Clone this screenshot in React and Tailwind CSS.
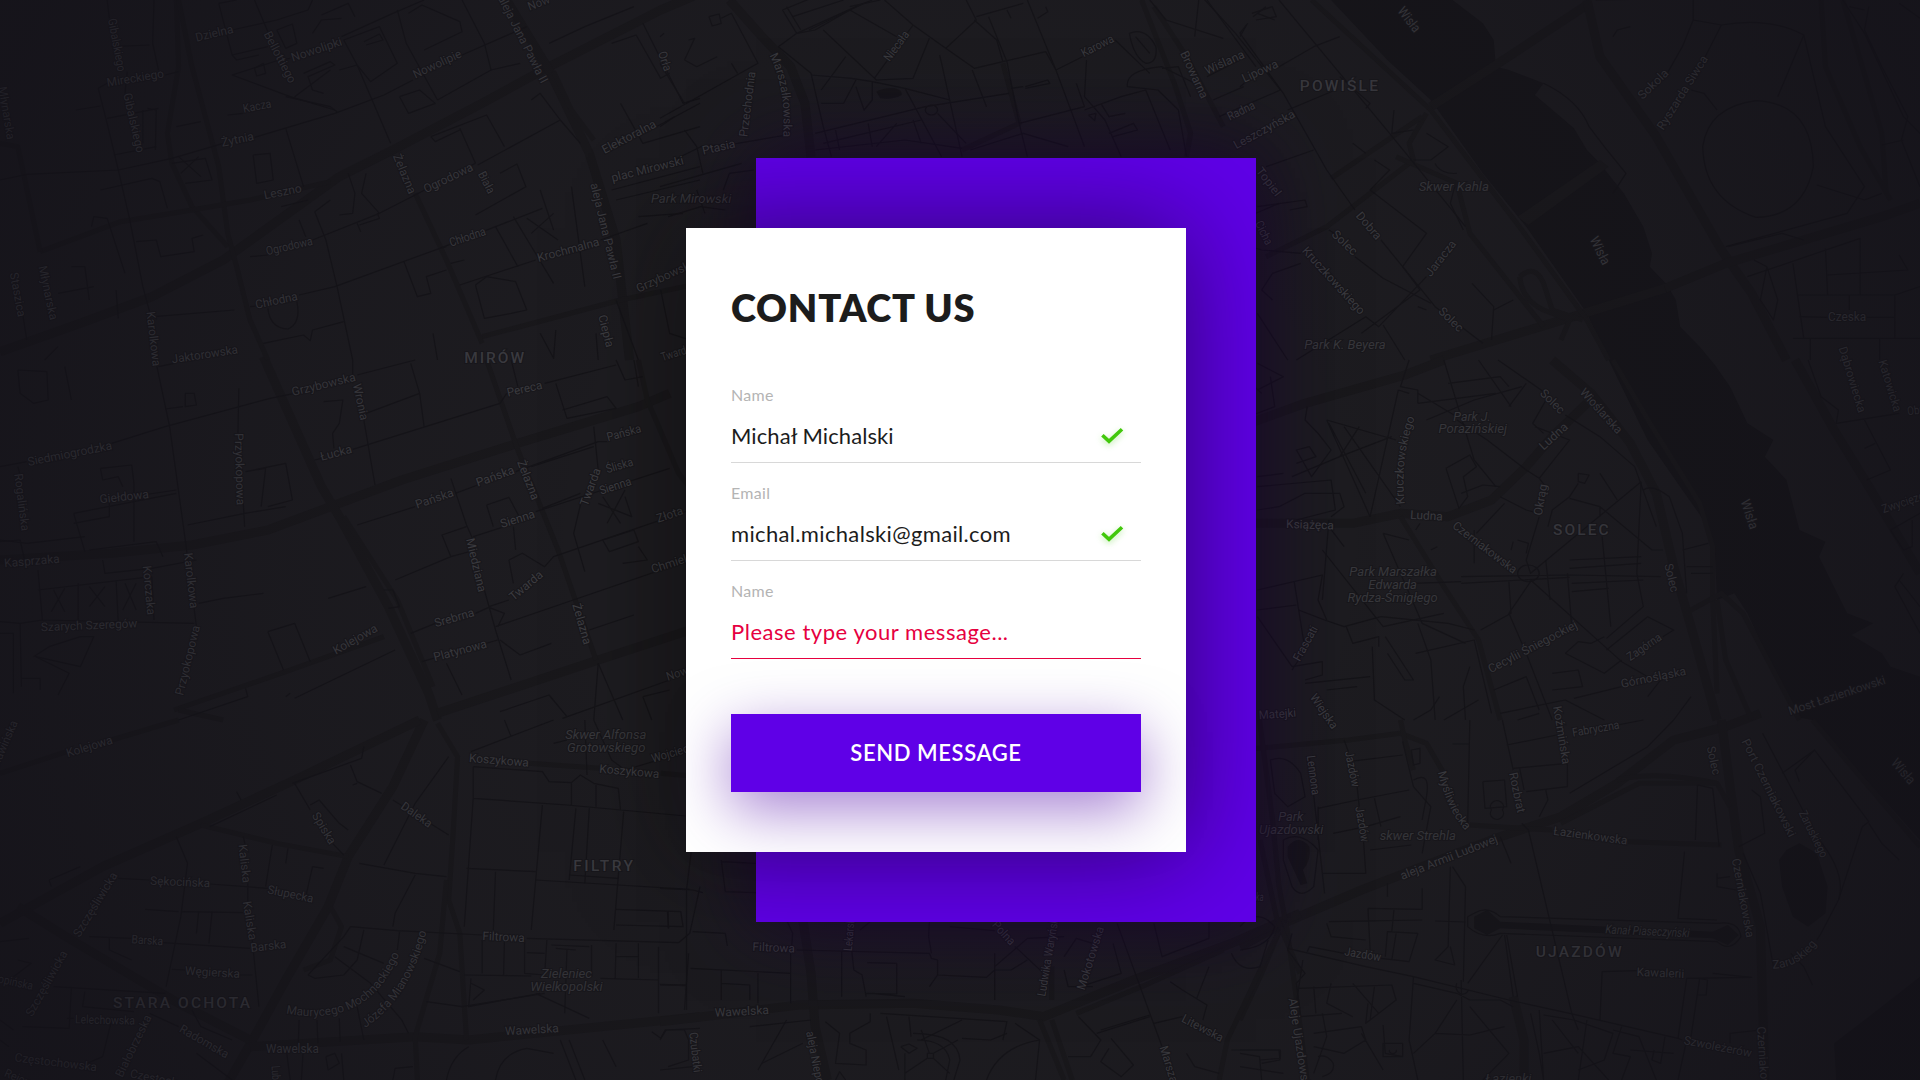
import React from "react";

/* Each map sheet keeps its own local units: x/y is the sheet origin on the page, s its horizontal scale. */
const SHEETS = [
  {
    x: 0, y: 0, s: 0.446429,
    wide: ["M0 1055L180 970L340 890L500 780L760 530L880 450L1080 310L1230 200L1480 30L1568 -20", "M1130 -10L1230 210L1320 460L1380 720L1410 1080"],
    mid: ["M395 0L400 200L375 400L385 490L430 620L510 740", "M400 0L430 200L490 500L510 700L530 800L560 960L600 1080", "M90 755L270 665L430 630L560 600L740 545", "M930 580L1000 780L1080 1030", "M0 430L40 440L90 755", "M1080 1010L1390 900L1568 850", "M1240 215L1280 330L1330 420"],
    thin: [
      "M240 0L245 55M285 215L280 280M345 0L342 130L355 210", "M250 140L335 135M220 265L240 370L265 510L290 655L320 860L335 935", "M220 265L240 250M370 225L400 215M0 540L60 523L265 510L385 475L500 430M570 412L750 340L860 285L925 240M1035 165L1180 80",
      "M170 330L225 318M240 355L355 325M255 465L350 440M225 570L340 535L358 545L375 625", "M330 325L350 330L348 450M320 330L320 430", "M490 10L520 165L600 140M490 10L530 0M570 0L600 95M520 165L530 180L580 165",
      "M520 90L620 60L690 30M690 30L700 0M650 175L625 180L520 225L650 290L750 330", "M620 90L655 72L665 130L640 145L620 90M570 205L590 190L595 220L575 228L570 205", "M640 290L740 320L755 335M740 210L660 290M680 220L740 185L750 195L690 230L700 270L725 280",
      "M760 210L800 195L875 430M800 195L770 120L850 80L890 190L830 245L800 195", "M815 125L850 102L858 120L820 135M890 30L910 130L980 300", "M720 45L780 10L795 50M700 100L720 60L765 55", "M915 40L945 15L1030 65L1035 95L950 150M1035 0L1085 130L1100 210L1165 190",
      "M765 110L880 40L950 0M1100 210L980 300M895 290L940 270L975 310L915 340L895 290", "M640 385L680 560M567 465L605 460L612 540L575 550L567 465M385 490L460 475L475 540L415 550", "M395 380L450 365M400 470L450 530M445 470L405 520M510 345L545 340",
      "M1030 385L1065 490M965 410L1090 345L1130 440M965 410L975 425L1030 390", "M1070 495L1255 360L1210 280L1190 300M1255 360L1300 430M1120 520L1158 492L1178 560L1065 645", "M780 520L795 580L790 640L760 645M820 520L810 580L850 640",
      "M630 620L690 600M705 635L740 600M705 635L730 720L755 860L790 1080M560 770L600 765M700 720L850 640L930 585L1065 490", "M805 675L850 655L845 640M800 670L808 695M670 660L685 710", "M670 885L750 860L985 745L1110 680L1215 625M985 745L1000 740M345 950L525 930M560 920L575 918",
      "M600 925Q605 985 645 987Q675 970 665 905M590 1030L680 1005L695 1022L700 990L770 965", "M905 785L935 890L965 880L955 830L1000 810M1030 855L1200 780M1345 720L1450 670", "M1065 855L1085 955L1145 940L1180 930L1155 845L1090 830L1065 855M1010 790L1040 780M1110 680L1160 800",
      "M1180 655L1250 720M1240 640L1190 700M1150 650L1240 850M1210 570L1240 690M1280 560L1310 860", "M1370 130L1425 105L1480 235L1500 220M1440 70L1530 310L1568 295M1470 380L1568 310", "M1390 310L1440 430L1568 380M1380 600L1568 540M1370 570L1568 500M1430 650L1530 640",
      "M205 680L210 650L240 655L280 820M160 800L190 800L200 900M130 880L210 860M305 725L350 720L360 770L435 755L430 715L455 705", "M60 1020L40 850M100 1080L130 1040M260 870L265 955", "M1380 900L1430 1080M1335 1000L1340 1080M1210 1000L1240 1075L1245 990M970 1000L980 1080",
      "M1480 870L1500 1000L1568 1030M1230 130L1310 80L1420 20",
    ],
    labels: [
      ["Gibalskiego", 242, 58, 264, 216, 26], ["Dzielna", 440, 125, 524, 98, 28], ["Bellottiego", 590, 102, 648, 252, 26], ["Nowolipki", 656, 185, 768, 135, 28], ["Mireckiego", 241, 260, 368, 232, 28], ["Gibalskiego", 276, 282, 306, 460, 28],
      ["Kacza", 546, 338, 609, 322, 26], ["Żytnia", 498, 440, 570, 420, 28], ["Nowolipie", 930, 236, 1036, 170, 28], ["aleja Jana Pawła II", 1115, -6, 1212, 252, 26], ["Now", 1186, 32, 1234, 8, 28], ["Orła", 1474, 158, 1488, 216, 26],
      ["Młynarska", -4, 262, 16, 420, 26], ["Elektoralna", 1354, 462, 1472, 380, 27], ["plac Mirowski", 1372, 546, 1533, 492, 28], ["Park Mirowski", 1458, 608, 1638, 609, 28, 1], ["Żelazna", 880, 468, 916, 584, 27], ["Ogrodowa", 954, 580, 1062, 510, 27],
      ["Biała", 1070, 522, 1094, 584, 26], ["Leszno", 593, 598, 677, 576, 28], ["aleja Jana Pawła II", 1322, 552, 1374, 840, 27], ["Ogrodowa", 598, 766, 702, 734, 27], ["Chłodna", 1010, 740, 1090, 704, 27], ["Krochmalna", 1206, 786, 1344, 736, 27],
      ["Grzybowska", 1430, 878, 1560, 798, 27], ["Staszica", 22, 820, 40, 952, 26], ["Młynarska", 86, 800, 112, 962, 27], ["Chłodna", 574, 926, 668, 900, 28], ["Karolkowa", 328, 936, 342, 1100, 27], ["Jaktorowska", 386, 1090, 534, 1060, 28],
      ["Ciepła", 1340, 948, 1358, 1044, 26], ["Twarda", 1484, 1084, 1550, 1056, 27], ["MIRÓW", 1040, 1090, 1174, 1090, 30, 2],
    ],
  },
  {
    x: 0, y: 360, s: 0.446429,
    wide: ["M0 600L250 580L430 555L600 510L740 440L900 360L1160 250L1430 140L1500 100", "M590 -10L720 380L760 470L870 740L960 1000L980 1080", "M980 1060L1340 900L1568 800"],
    mid: ["M1090 0L1160 270L1250 570L1335 900", "M1430 0L1450 120L1520 340L1568 420", "M390 1050L640 935L860 830", "M770 470L890 720L970 980", "M400 1050L500 1080"],
    thin: [
      "M350 10L380 200L415 540L440 800M0 320L60 305M250 250L370 200L605 115L660 100M355 20L390 10M800 45L930 0", "M40 30L105 35L108 120L75 130L45 100L40 30M145 20L160 120M415 100L435 100L440 135L415 140L415 100", "M370 147L410 140M535 85L533 220M545 430L548 500M420 495L548 460L640 440",
      "M725 125L768 120L760 190L745 220L748 265M790 0L790 70M815 180L840 375M920 10L940 100L820 160M940 100L950 200", "M705 300L720 295M790 268L1120 130L1135 100M1220 70L1380 15M1145 0L1160 80", "M225 325L295 315L300 370L300 545M225 325L230 360L265 350L275 380M165 460L395 400M165 460L190 575M165 490L245 470L245 420L395 390",
      "M550 335L595 325L585 440M550 335L640 310L655 420L600 440M40 320L45 345M0 540L60 550L190 530", "M0 545L45 540L55 600M200 570L350 545L365 590M230 600L235 640L340 625L440 600", "M800 495L930 440M1020 400L1070 375M1155 335L1340 245L1360 245M1190 320L1330 260",
      "M1010 355L1045 495L1060 540M1045 500L990 525L1010 590L885 660M1090 435L1140 412L1165 475M1090 435L1105 500M1010 590L1065 570", "M1060 530L1130 500M1200 455L1350 390L1500 325M1215 445L1300 400M1330 200L1340 330M1300 435L1285 520L1310 635", "M1140 600L1170 580L1220 620L1240 590L1568 440M1140 600L1150 670M1150 500L1155 570",
      "M1350 540L1420 510L1430 545L1365 575L1350 540M1430 560L1450 600L1395 610M1350 410L1390 490M1400 390L1360 490M1400 410L1415 470L1340 430", "M1110 800L1284 720L1568 590M1095 740L1140 720M920 820L975 790M1065 760L1095 742L1130 760L1115 800M1085 690L1110 810L1145 960",
      "M735 715L820 680M600 815L660 790L695 905M600 815L635 930M660 1015L885 870M860 690L880 690L895 740L870 745", "M445 730L500 715L590 700M85 690L340 650M85 630L95 780M95 780L435 790M0 785L45 790L95 780M175 670L175 780M260 660L265 790M340 650L345 780",
      "M120 690L145 755M145 685L115 755M200 680L235 740M235 680L200 740M280 670L305 750M305 670L275 750", "M0 820L30 820L30 1000M45 790L48 980M75 890L110 860L180 830L210 830L180 920L80 890L155 940L130 1005M48 955L90 955L90 990",
      "M550 985L555 1010L400 1080M640 1010L650 1000M1120 840L1165 885L1235 850M945 905L1115 840M1320 810L1420 765M1000 910L1035 1005", "M1340 910L1330 1080M1340 910L1395 1080M1120 1055L1230 1005L1270 1070M1440 1010L1500 990M1440 1010L1460 1080M1260 1075L1500 960",
      "M1245 70L1270 175L1380 145L1360 110L1260 150M1380 0L1400 60L1440 50M1420 0L1430 80",
    ],
    labels: [
      ["Grzybowska", 656, 108, 798, 62, 28], ["Wronia", 790, 74, 808, 182, 27], ["Pereca", 1138, 110, 1216, 86, 28], ["Pańska", 1362, 244, 1438, 216, 27], ["Siedmiogrodzka", 64, 318, 252, 268, 28], ["Łucka", 720, 302, 790, 278, 28],
      ["Przyokopowa", 526, 220, 530, 436, 27], ["Pańska", 1070, 380, 1154, 340, 27], ["Śliska", 1360, 340, 1420, 316, 27], ["Twarda", 1316, 440, 1346, 330, 26], ["Sienna", 1346, 404, 1416, 374, 26], ["Rogalińska", 32, 342, 48, 514, 27],
      ["Giełdowa", 224, 430, 334, 414, 28], ["Pańska", 934, 446, 1018, 408, 28], ["Żelazna", 1158, 306, 1192, 422, 27], ["Sienna", 1124, 504, 1200, 472, 27], ["Złota", 1474, 488, 1532, 462, 27], ["Kasprzaka", 10, 622, 134, 608, 28],
      ["Karolkowa", 412, 580, 426, 746, 27], ["Korczaka", 320, 618, 330, 766, 27], ["Miedziana", 1044, 538, 1072, 698, 27], ["Twarda", 1150, 724, 1218, 648, 27], ["Chmielna", 1462, 640, 1568, 594, 27], ["Szarych Szeregów", 92, 814, 308, 802, 28],
      ["Srebrna", 976, 802, 1064, 768, 28], ["Żelazna", 1282, 734, 1308, 856, 27], ["Kolejowa", 752, 884, 848, 812, 27], ["Platynowa", 974, 904, 1092, 862, 28], ["Przyokopowa", 410, 1008, 448, 800, 27], ["Nowogrodzka", 1496, 962, 1640, 900, 28],
    ],
  },
  {
    x: 0, y: 720, s: 0.446429,
    wide: ["M950 0L880 200L780 410L735 560L640 780L570 950L510 1090", "M0 610L230 440L450 310L660 180L940 0", "M40 560L160 660L400 850L560 960", "M560 980L930 950L1050 960L1568 890"],
    mid: ["M980 10L1025 110L1015 340L1005 540L1030 640L1045 960", "M450 315L620 370L780 410", "M1185 130L1345 145M1480 160L1568 170", "M0 160L150 95M250 60L400 0", "M1000 480L985 700L930 950L935 1080", "M740 560L765 620L740 720L680 750"],
    thin: [
      "M655 190L810 115L815 80M785 135L800 185L855 220M660 190L695 270M745 370L770 405M695 255L715 240L760 310L780 330M470 320L620 225M530 215L540 240", "M800 190L790 195M880 240L1005 345M1005 110L930 250L860 435M805 430L930 460L1000 470M930 465L885 580L880 620",
      "M1055 95L1240 0M1130 0L1145 50M1060 235L1270 255L1536 288M1060 140L1060 235L1040 620M1060 140L1215 155L1230 185L1280 188L1300 165L1330 190L1385 205L1390 270", "M1280 190L1280 255M1335 195L1335 260M1215 255L1200 480L1190 630M1290 265L1275 480M1320 265L1310 490M1397 275L1375 630",
      "M1045 445L1200 455M1110 455L1105 630M1200 480L1385 495L1545 508M1275 465L1385 475M1380 568L1525 575L1530 620L1380 615M1495 575L1498 625", "M785 620L890 632L1080 645M1180 655L1520 668L1545 640L1568 500M785 620L770 650L690 765", "M1040 765L1190 768M1345 775L1475 780M1055 775L1050 860L1210 820M1055 790L1085 810L1060 840M1200 820L1320 895",
      "M1080 660L1080 760M1130 660L1128 765M1175 660L1175 760L1220 765L1225 660M1380 670L1378 775M1430 670L1430 775M1475 680L1475 880M1380 710L1430 710M1180 698L1220 700", "M1235 675L1320 680M1245 685L1290 690M1325 675L1325 770M1270 690L1265 880M1478 793L1536 795",
      "M265 475L335 480M470 492L600 505M395 350L420 430L405 590L372 800M405 575L545 578M325 568L400 575M545 350L550 380M555 490L555 545M565 660L580 860", "M200 650L295 655M365 668L560 685M445 575L440 640M475 575L468 670M610 375L595 500M645 385L640 430M700 440L685 530M700 440L725 445",
      "M120 800L370 820M160 800L155 925L50 920M190 815L185 860L300 875M385 748L415 750M538 765L565 765M245 655L245 690L295 720M150 895L165 895", "M0 665L65 655M30 770L70 730L40 720M110 480L180 440M110 480L115 500M430 870L450 920L520 960M335 880L400 920",
      "M690 765L705 775L770 765L800 720L815 630M770 680L860 730M750 710L830 790L900 900L915 940M895 635L890 690M950 715L1030 755M955 845L1035 860L1220 820", "M800 860L815 960M670 900L668 975M710 900L712 970M760 895L762 965M680 975L675 1080M640 975L650 1080M765 1000L770 1080",
      "M730 1010L750 1000L760 1030L735 1050L730 1010M1110 1080Q1120 1000 1180 985L1240 1000M1050 980Q1010 1010 1000 1080M1255 960L1290 1080M1275 960L1310 1080M1350 960L1380 1040", "M1460 935L1480 955L1490 930L1568 925M880 1080L885 1045L925 1040M250 900L230 1010L195 1030M440 1000L520 1080M0 900L30 930M0 960L20 980",
      "M1240 70L1270 60M1310 0L1315 165M1330 0L1370 120L1400 150L1500 110",
    ],
    labels: [
      ["Bolesławińska", -24, 206, 40, 8, 25], ["Kolejowa", 152, 112, 254, 70, 28], ["Skwer Alfonsa", 1266, 56, 1448, 56, 28, 1], ["Grotowskiego", 1270, 96, 1446, 96, 28, 1], ["Wojciecha", 1462, 128, 1570, 86, 28], ["Koszykowa", 1050, 126, 1184, 140, 28],
      ["Koszykowa", 1342, 158, 1476, 174, 28], ["Daleka", 896, 264, 960, 324, 27], ["Spiska", 698, 286, 738, 376, 27], ["FILTRY", 1284, 454, 1418, 454, 32, 2], ["Kaliska", 534, 374, 544, 490, 27], ["Sękocińska", 336, 494, 470, 502, 28],
      ["Słupecka", 598, 520, 700, 548, 28], ["Kaliska", 544, 545, 558, 662, 27], ["Szczęśliwicka", 178, 654, 264, 466, 27], ["Barska", 294, 670, 365, 676, 28], ["Barska", 562, 696, 642, 684, 28], ["Filtrowa", 1080, 660, 1175, 666, 28],
      ["Szczęśliwicka", 72, 892, 152, 700, 27], ["Węgierska", 414, 764, 537, 774, 28], ["Chopińska", -32, 780, 72, 810, 27], ["STARA OCHOTA", 253, 864, 560, 864, 32, 2], ["Zieleniec", 1212, 774, 1326, 774, 28, 1], ["Wielkopolski", 1188, 812, 1350, 812, 28, 1],
      ["Maurycego Mochnackiego", 640, 880, 898, 690, 27, 0, 830, 930], ["Józefa Mianowskiego", 818, 924, 954, 640, 26, 0, 920, 830], ["Lelechowska", 168, 910, 302, 914, 28], ["Białobrzeska", 274, 1074, 340, 892, 27], ["Radomska", 400, 934, 506, 1016, 27], ["Wawelska", 1132, 946, 1252, 936, 28],
      ["Wawelska", 596, 998, 714, 998, 28], ["Częstochowska", 32, 1024, 216, 1054, 28], ["Czubatki", 1544, 938, 1554, 1058, 25], ["Częstochowska", 290, 1072, 470, 1120, 27], ["Lubelska", 608, 1038, 612, 1140, 26], ["Rejowa", 8, 1068, 80, 1110, 27],
    ],
  },
  {
    x: 1240, y: 0, s: 0.433673,
    water: ["M210 0L490 0L560 70L585 120L590 200L620 210L700 250L680 285L770 385L800 450L830 490L860 540L885 580L930 680L950 760L945 800L985 855L1005 900L1015 980L1060 1040L1095 1095L1130 1160L1170 1270L1230 1320L1210 1370L1260 1440L1290 1590L1350 1625L1335 1670L1400 1840L1460 1870L1410 1905L1480 1960L1500 2000L1568 2030L1568 2520L1320 2160L1280 2150L1170 1840L1140 1780L1100 1800L1095 1650L1080 1580L1020 1470L940 1320L850 1080L800 940L660 680L560 520L440 300L340 180Z"],
    land: ["M640 650L830 480L850 500L665 675Z"],
    wide: ["M440 320L590 195L800 15", "M800 0L830 170L960 410L1110 750L1180 880L1260 1080", "M980 865L1120 790L1480 650L1568 610", "M440 1080L680 985L980 865"],
    mid: ["M165 0L440 330L650 690L800 960L850 1080", "M60 770L200 680L400 480L390 430L430 340", "M360 470L500 550L530 700L700 980", "M1340 0L1350 200L1430 440L1500 600M1390 0L1480 400L1490 580", "M210 535L420 350", "M645 830Q680 790 700 850L720 930L790 960M645 830Q650 900 700 930L760 960L740 1020"],
    thin: [
      "M90 0L345 400L520 680M0 100L100 280L200 510L265 630M325 720L450 920L560 1030", "M0 260L10 250M90 200L170 140L230 110M110 330L220 270M60 500L170 450M0 660L90 610M230 230L300 310L290 325M40 40L80 60M30 50L60 20M0 110L15 75",
      "M260 430L290 460M310 480L345 510L300 570L430 700L375 800L415 870L280 1000M205 690L230 710M265 770L330 835L440 910M430 830L320 980L290 950M535 850L585 920L580 1020M585 930L630 900", "M400 390L350 400L355 330M430 400L480 440L440 480L400 480M450 490A45 40 0 0 0 500 520M495 560L485 610L515 690",
      "M1045 0L1045 60L1020 140L985 220M1045 60L1110 75L1065 190M1110 75Q1220 50 1300 105L1240 290M1300 105L1350 380L1440 560L1400 640L1120 740M1040 270L1070 280L1100 330", "M1190 302Q1320 310 1322 500Q1300 650 1190 652Q1070 600 1067 440Q1080 320 1190 302Z",
      "M1390 0L1440 100L1530 350L1568 400M1450 20L1440 90L1480 200L1540 350L1525 420L1568 560M1520 10L1568 55M1480 435L1530 420M1330 555L1440 600L1480 580M1405 20L1440 30", "M1125 740L1250 700L1300 720M1170 830L1430 715L1430 885M1350 745L1355 885M1275 790L1300 1015M1285 885L1510 885L1568 860M1290 950L1355 952M1445 952L1510 952M1510 885L1510 1015M1275 1015L1568 1015M1355 825L1540 810L1520 765M1315 1015L1315 1080M1475 1015L1475 1080M1405 885L1405 930",
      "M1185 780L1215 800L1240 900L1230 960L1200 900L1215 800M40 620L150 600L155 620L115 630M0 730L50 750L140 760M140 790L75 820L50 870L75 900", "M40 940L110 1080M290 950L130 1080M330 975L380 1080M410 920L430 930M820 0L1040 -5M700 250Q780 300 805 380L840 440L890 520L860 580M860 110L870 90L900 80",
    ],
    labels: [
      ["Wisła", 362, 34, 402, 100, 32], ["POWIŚLE", 138, 272, 318, 272, 34, 2], ["Lipowa", 10, 248, 90, 200, 28], ["Sokola", 928, 300, 990, 222, 27], ["Ryszarda Siwca", 976, 392, 1080, 176, 28], ["Topiel", 36, 514, 82, 592, 27],
      ["Skwer Kahla", 412, 572, 574, 572, 29, 1], ["Cicha", 34, 670, 60, 738, 26], ["Dobra", 266, 648, 314, 722, 27], ["Solec", 210, 706, 260, 768, 27], ["Jaracza", 440, 832, 500, 732, 27], ["Wisła", 806, 718, 836, 798, 32],
      ["Kruczkowskiego", 142, 754, 276, 946, 28], ["Solec", 456, 936, 504, 998, 27], ["Park K. Beyera", 148, 1046, 336, 1046, 29, 1], ["Czeska", 1356, 962, 1444, 962, 28], ["Dąbrowiecka", 1380, 1044, 1426, 1240, 28],
    ],
  },
  {
    x: 1240, y: 360, s: 0.433673,
    wide: ["M0 200L150 130L380 45L470 0", "M0 490L260 490L370 460L480 470L580 420L660 320L720 230L800 130", "M1280 0L1370 210L1450 380L1568 640", "M720 0L810 100L900 250L960 400L1000 620L1040 800L1100 1080"],
    mid: ["M860 0L950 200L1060 430L1090 560L1090 720L1100 1000", "M1040 750L1110 700L1160 760L1290 1080", "M370 470L470 680L550 840L600 1080", "M1100 720L1120 900L1180 1080"],
    thin: [
      "M595 0L700 95M750 165L830 230L910 320L960 500M650 80L540 120L430 180M470 0L540 300L590 380M550 0L625 140M660 70L620 140M480 70L600 50L620 80", "M680 200L760 240L690 355L660 330L570 240L500 180M710 110L675 190L700 220M690 355L705 380M830 340L870 420M780 340L805 345L795 370L780 365L780 340M780 370L760 410L720 450L710 500",
      "M925 365L670 640L660 600L690 470M640 640A20 20 0 1 0 690 640A20 20 0 1 0 640 640M925 365L915 640L930 740L845 835M760 415L830 440L950 570L975 570M830 440L830 470", "M475 325L530 285L545 320L515 350L525 410L505 445L475 325M510 400L560 375L600 380M600 410L660 450L690 460M610 430L545 520",
      "M200 180L300 470M200 180L360 240M240 200L370 440M275 200L230 290L120 350M230 290L350 230M205 190L290 400M365 90L300 470M365 90L390 100M410 130L590 100M410 100L500 170M390 0L370 80L410 90L410 130", "M130 310L175 290L160 260L130 270L165 350L210 270L180 220L150 180L155 140M40 380L210 360L220 450L130 480M40 450L90 440L150 400L230 400L240 440L210 470",
      "M40 690L190 645L180 720L200 780M125 665L150 870L120 930M40 750L130 735M40 770L120 920M330 520L420 790L520 850M205 500L240 560M205 480L190 720M330 520L390 540", "M510 650L760 645L970 650M510 670L760 652M400 670L510 665M760 600L925 590M760 625L925 610M765 670L930 660M765 695L850 685M705 600L715 720M540 510L540 610M835 530L855 800M755 640L765 800",
      "M670 660L880 905L940 950M640 540L665 550L660 580M625 570L630 545M620 665L625 760L555 810M670 665L620 760L660 880L720 1080M415 490L405 510M440 570L455 560", "M135 750L195 780L240 800L325 770L480 790L540 810M245 800L260 850L320 830L320 860M305 860L310 1020L380 1080M335 830L400 960L380 960L340 880M410 790L440 900L450 1080",
      "M845 870L940 770L1000 810L975 830M750 880L780 845L810 850L840 830M750 880L840 940L880 900M120 920L190 905L190 945L150 960M150 970L300 950M200 990L270 980M585 990L660 950L690 1050M720 940L780 930L790 980L720 990", "M405 880L540 840L580 1060M530 920L515 980L520 1080M770 1015L880 980M1030 940L970 960L940 1010M600 1060L750 1020L840 1080M640 1080L690 1060",
      "M930 390Q950 370 990 410L1020 520L1030 700M1020 570L1080 550M1030 620L1090 620M1040 640L1090 640", "M1310 0L1340 110L1380 150L1375 190L1520 160M1440 180L1500 330L1445 360M1440 265L1465 250M1568 460L1500 510L1530 570L1550 560L1550 480M1520 660L1568 740M1530 640L1510 680L1568 820",
      "M40 90L100 50L40 10M70 50L80 140L0 180M0 40L50 100M40 350L100 340M1040 1010L1000 1080M550 1020L470 1080M460 1010L440 1050L400 1080M190 570L330 800L470 760",
    ],
    labels: [
      ["Wioślarska", 782, 98, 870, 224, 28], ["Solec", 690, 102, 738, 164, 27], ["Park J.", 492, 182, 578, 182, 29, 1], ["Porazińskiej", 458, 220, 616, 220, 29, 1], ["Ludna", 700, 272, 758, 204, 28], ["Kruczkowskiego", 380, 432, 402, 178, 27, 0, 368, 300],
      ["Katowicka", 1472, 4, 1508, 158, 27], ["Obrońców", 1540, 166, 1640, 150, 27], ["Okrąg", 696, 468, 708, 374, 27], ["Ludna", 392, 476, 467, 482, 28], ["Książęca", 106, 504, 216, 508, 29], ["SOLEC", 722, 524, 850, 524, 34, 2],
      ["Czerniakowska", 488, 502, 630, 642, 28], ["Wisła", 1154, 424, 1176, 510, 32], ["Zwycięzców", 1484, 460, 1610, 404, 27], ["Park Marszałka", 252, 647, 454, 647, 29, 1], ["Edwarda", 296, 686, 408, 686, 29, 1], ["Rydza-Śmigłego", 248, 726, 456, 726, 29, 1],
      ["Solec", 978, 614, 994, 698, 27], ["Cecylii Śniegockiej", 578, 940, 780, 802, 28], ["Frascati", 138, 906, 180, 806, 27], ["Zagórna", 900, 904, 974, 838, 27], ["Górnośląska", 880, 984, 1030, 944, 28], ["Most Łazienkowski", 1268, 1066, 1490, 970, 29],
      ["Wiejska", 160, 1012, 212, 1110, 27], ["Matejki", 44, 1078, 130, 1070, 28], ["Koźmińska", 722, 1040, 744, 1214, 27],
    ],
  },
  {
    x: 1240, y: 720, s: 0.433673,
    water: ["M1260 390L1290 370L1330 400L1355 500L1350 580L1310 620L1275 590L1250 500L1243 420Z", "M540 590L570 570L600 605L1090 635L1125 615L1150 645L1125 675L1090 655L600 625L570 645L540 625Z", "M1568 770L1450 890L1370 970L1375 1080L1568 1080Z", "M110 380Q135 340 160 380Q165 420 145 450L155 490L140 495L110 410Z"],
    wide: ["M0 680L100 610L280 510L600 350L740 290L870 190L1000 60L1120 20L1200 -20", "M1110 0L1130 200L1150 390L1200 620L1210 1080", "M630 830L655 960L655 1080"],
    mid: ["M870 180Q960 150 1100 190L1130 260", "M0 90L250 60L370 40L430 70L470 160M530 315L650 325L720 330M895 365L1110 375", "M370 0L380 60L400 150", "M95 620L50 760L0 900", "M45 0L75 300L90 500L110 640L155 1080", "M1320 0L1450 200L1568 380", "M740 310L920 190L1100 190"],
    thin: [
      "M240 60L250 95M270 200L275 260M285 365L290 460L190 460M250 125L375 105M180 265L270 240L390 210M215 340L290 320L370 290M300 390L395 375M160 110L195 520M375 65L400 200L440 260L420 400M180 360L180 260M310 235L325 320", "M395 90L415 85L415 130L400 135L395 90M400 180Q440 150 430 230L420 300",
      "M560 185L610 180L615 260L565 265L560 185M580 270A15 18 0 1 0 605 270A15 18 0 1 0 580 270M530 0L525 310M490 72L530 72M605 0L630 150M615 75L730 45M735 0L745 130M630 145L755 130L755 200L660 215M645 145L655 210M650 310L665 330L765 880L780 930", "M1000 0L940 80L760 220M770 40L930 0M690 290L710 240L705 210M600 350L625 430",
      "M1055 195L1050 360M1055 195L1090 205L1105 380M1025 395L1010 595L1100 600M1100 460L1100 500L1145 510M1100 475L1130 470M1150 380L1210 340L1200 230L1180 210M1205 40L1330 350M1250 160L1325 90L1450 305L1435 320L1380 540M1325 90L1280 150L1290 185", "M1330 350Q1400 460 1380 540L1340 640L1330 660M1230 740L1200 520L1160 400M1450 310L1480 370L1520 420M1270 700L1300 740L1320 795",
      "M525 590L540 580Q570 555 600 590L1100 610Q1150 600 1155 650Q1130 700 1100 665L600 640Q560 660 525 620ZM450 603L520 606M605 645L525 790M610 645L630 830M615 645L640 830", "M110 685L290 740L400 770L620 840L760 880L1010 955L1020 960M155 695L160 680L240 700M325 715L390 725L410 640L340 635L335 710M360 640L350 720M295 565L420 568L420 505M295 565L300 690M205 605L420 600M355 570L350 635M200 610L210 650L290 660M340 490L340 530M485 440L480 680L450 720L495 735L485 680M490 440L520 500L515 785",
      "M120 640L110 690L150 760L130 790L140 890L235 880M145 720L130 850M135 805L350 795L360 840L290 910L295 850M170 800L175 880M210 790L200 850L260 890M260 790L320 880M310 800L300 900M400 770L390 960L410 1080M400 790L500 820L530 840L600 840L630 860M500 840L450 940L400 1000M450 940L530 945L610 920M530 860L620 1000L560 1080M510 780L515 1080M500 790A15 22 0 1 0 527 810",
      "M170 940L280 920L290 960L240 1000L170 980M330 915L335 1000L375 1010M330 970L375 970L375 1010L330 1010ZM345 990A8 8 0 1 0 360 990M0 990L90 990L92 1020L50 1030M0 1000L45 1010L50 1080M180 1010Q200 1000 215 1030Q220 1060 190 1070M280 940L330 1050", "M670 880L690 1000L700 1080M690 870L700 1080M700 885L770 900L860 940L840 1020L780 1050M700 1000L780 980L850 1080M720 900L780 1000M800 900L780 1080M860 930L920 950L960 1080M880 920L860 1000L900 1010L880 1080M980 950L970 1030L950 1020L955 990M1030 960L1010 1080M900 990L1000 1000",
      "M830 900L835 755L915 752M1030 775L1180 772L1090 760M1030 775L1010 955M1060 775L1040 950M1060 775L1078 780L1075 825L1055 825M1200 930L1130 940L1130 970", "M0 1040L100 1060M190 880L200 950L170 1060M0 620Q40 560 80 620Q70 680 0 690M70 120Q110 100 140 160L150 230L110 260L80 220ZM100 360Q140 330 180 390L170 500Q140 540 120 500L100 420Z",
    ],
    labels: [
      ["Fabryczna", 768, 50, 876, 26, 28], ["Solec", 1076, 82, 1090, 166, 27], ["Port Czerniakowski", 1156, 64, 1266, 354, 28], ["Wisła", 1500, 130, 1544, 196, 32], ["Lennona", 154, 108, 166, 226, 26], ["Jazdów", 242, 96, 258, 202, 27],
      ["Myśliwiecka", 456, 156, 516, 326, 27, 0, 478, 270], ["Rozbrat", 620, 160, 640, 280, 27], ["Jazdów", 266, 262, 280, 368, 27], ["Park", 88, 302, 146, 302, 29, 1], ["Ujazdowski", 44, 341, 192, 341, 29, 1], ["skwer Strehla", 322, 359, 498, 359, 29, 1],
      ["Łazienkowska", 722, 344, 892, 374, 28], ["aleja Armii Ludowej", 374, 480, 596, 366, 28], ["Zaruskiego", 1288, 278, 1340, 416, 27], ["Czerniakowska", 1134, 418, 1168, 654, 27], ["Kanał Piaseczyński", 842, 640, 1036, 652, 26, 1], ["UJAZDÓW", 682, 710, 880, 710, 36, 2],
      ["Jazdów", 240, 706, 324, 724, 28], ["Zaruskiego", 1228, 746, 1330, 672, 27, 0, 1290, 744], ["Kawalerii", 914, 768, 1024, 774, 28], ["Aleje Ujazdowskie", 112, 836, 146, 1130, 27], ["Szwoleżerów", 1022, 972, 1178, 1012, 28], ["Czerniakowska", 1192, 920, 1204, 1160, 27], ["Łazienki", 566, 1088, 672, 1088, 29, 1],
    ],
  },
  {
    x: 660, y: 0, s: 0.408163,
    water: ["M530 275Q545 262 575 265Q595 272 592 285Q570 300 540 295Z"],
    wide: ["M170 0L250 110L320 200L355 310L370 470"],
    mid: ["M1210 20L1290 170L1380 380", "M840 190L880 370L740 450", "M1180 0L1260 250L1300 400L1290 470"],
    thin: [
      "M120 50L145 42L150 70L128 78L120 50M150 55L175 40L240 190L0 355M0 110L10 100M60 180L85 115L70 120M60 180L90 200L140 170M175 190L190 220", "M0 190L60 310M300 30L400 -20M300 30L335 100L480 20L520 0M310 20L345 90M290 140L335 100L380 90L465 30L580 110M290 140L370 220L400 380L420 470", "M325 50L450 0M365 90L500 10M400 90L530 240L620 235L660 115M465 20L540 0",
      "M550 0L620 75L700 145L770 205L840 185L945 155L970 210M620 75L525 235M700 145L775 60L750 0M775 50L890 10M770 60L825 120L840 185M900 0L970 210L1040 440M850 30L860 55M805 50L850 185L880 370L900 470M925 55L950 35L945 20",
      "M370 225L470 235L520 245L600 265L710 300M480 240L450 310L395 310M520 245L520 300L500 330L480 260M455 170L395 270M600 265L690 470M685 165L690 190L740 470M765 210L800 320M380 400L650 320L855 280M650 330A15 15 0 1 0 680 330A15 15 0 1 0 650 330",
      "M400 430L640 360M380 450L600 420L740 445M430 390L440 450M510 370L520 440M580 370L530 440M620 360L640 430M680 340L750 430M895 260L950 240L955 250L895 265M860 265L890 260M880 370L1040 320L1020 250M760 450L890 400L1000 440",
      "M970 210L1035 170M1115 120L1200 220M1150 100Q1190 80 1215 140Q1220 190 1190 190Q1160 170 1150 100M1165 110L1200 160M1145 260Q1140 210 1230 200L1310 250M1145 260L1220 270L1270 330L1290 470M1230 205L1270 200L1300 290M1200 0L1240 60L1380 115M1320 0L1310 110M1320 -20L1410 100L1520 270",
      "M1045 180L1040 290L1090 360L1130 470M1040 330L1130 290L1190 270L1250 450M1080 310L1100 350L1140 340M1100 400L1160 370L1170 390L1110 410M1050 345L1068 340L1065 362L1050 345M1340 230L1420 180M1355 300L1430 260M1370 350L1520 270M1340 0L1460 200M1420 100L1440 70M1450 40L1500 20L1510 50L1460 60",
      "M0 380L35 350M0 500L100 440L190 430L310 405M0 560L200 490M60 390L90 440L105 520M155 570L170 520L230 510M20 650L100 620L160 630M90 570L110 640",
    ],
    labels: [
      ["Niecała", 562, 186, 612, 104, 28], ["Karowa", 1038, 172, 1114, 124, 29], ["Marszałkowska", 268, 166, 302, 402, 30, 0, 308, 260], ["Przechodnia", 214, 412, 234, 216, 29], ["Ptasia", 106, 464, 186, 442, 31], ["Browarna", 1274, 160, 1326, 298, 29],
      ["Wiślana", 1340, 224, 1434, 172, 31], ["Radna", 1396, 362, 1460, 324, 30], ["Leszczyńska", 1412, 448, 1558, 350, 31],
    ],
  },
  {
    x: 660, y: 840, s: 0.408163,
    wide: ["M0 545L140 525L340 495L620 490L830 510L940 530L1160 420L1400 310L1568 220", "M350 240L370 400L380 560L410 720"],
    mid: ["M1530 240L1490 340L1390 600L1370 720", "M930 540L990 720M960 540L1010 720", "M1470 0L1510 230L1568 400", "M1020 520L1180 440L1380 330", "M960 380L960 480"],
    thin: [
      "M80 0L65 150L65 510M150 60L160 155L235 158M0 145L80 150L105 158M150 65L235 70M75 385L320 400M150 390L150 480M150 430L220 435L220 480M240 400L240 490M320 330L320 490M0 435L65 437M335 330L660 340L665 355L680 360L680 405L800 412L820 390L860 390L900 360", "M310 240L325 280L322 330M80 275L160 280L165 318M20 215L20 265M70 340L60 510",
      "M445 335L445 470M470 335L475 390L495 405L505 470M508 368L580 370L580 462L505 460M520 460L600 470M660 245L658 290L665 340M490 270L515 245M710 260L820 272M820 340L820 480M820 380L900 295L990 290M870 320L940 400M990 350L1020 295L1060 310M660 440L680 405",
      "M1120 250L1200 520L1260 720M1080 570L1200 525M1210 250L1230 350L1345 295L1345 245M1110 310L1130 400L1030 440M990 390L1000 440L1060 440M1250 425L1280 450L1340 495L1330 540M1345 380L1315 475M1400 340Q1420 400 1470 380L1490 300", "M1025 530L1080 600L1055 650L1000 650M1105 595L1160 675L1130 710L1080 665L1100 625M1070 580L1200 530M1210 550L1280 530M1290 640L1310 680L1370 700M1400 630L1520 630L1520 655L1470 660",
      "M405 545L440 580L430 670L505 675L505 630L465 610L465 580L515 545L515 520M0 600L15 570L60 570L70 600L70 660L20 680M240 690L310 540M350 610L250 670M540 520L850 545L840 600M555 530L585 690M610 530L615 590M640 600L740 540", "M590 620L610 612L630 625L610 640L590 620M655 640L670 640L670 655L655 655ZM630 600Q700 600 710 660L700 720M620 580Q730 580 735 660L720 720M600 640L600 720M660 640L640 570M670 655L710 700M655 655L600 700M670 640L730 600M740 595L810 600L850 580M870 550L930 600L920 720M800 720Q830 620 930 600M430 720L440 695L455 720",
      "M370 540L220 560M0 690L80 680",
    ],
    labels: [
      ["Lekarska", 470, 334, 478, 222, 28], ["Polna", 812, 256, 858, 318, 28], ["Ludwika Waryńskiego", 944, 470, 984, 180, 29], ["Mokotowska", 1040, 452, 1088, 264, 28], ["Filtrowa", 226, 332, 330, 338, 31], ["Wawelska", 135, 530, 267, 522, 31], ["Litewska", 1276, 544, 1374, 606, 29],
      ["aleja Niepodległości", 358, 576, 402, 860, 29], ["Marszałkowska", 1224, 622, 1280, 850, 29], ["ska", 1450, 180, 1478, 184, 26],
    ],
  },
];

/* Vertical scale shared by all sheets. */
const SY = 1 / 3;

function Label({ id, sheet, data }) {
  const [text, ax, ay, bx, by, , kind, qx, qy] = data;
  const px = (v) => sheet.x + v * sheet.s;
  const py = (v) => sheet.y + v * SY;
  const x1 = px(ax), y1 = py(ay), x2 = px(bx), y2 = py(by);
  const size = kind === 2 ? 15.5 : text === "Wisła" ? 13.5 : kind === 1 ? 12.5 : 12;
  const look = kind === 2 ? "fill-[#3d3d42] font-medium" : kind === 1 ? "fill-[#39393d] italic" : "fill-[#3d3d41]";
  if (qx) {
    return (
      <g>
        <path id={id} d={`M${x1} ${y1}Q${px(qx)} ${py(qy)} ${x2} ${y2}`} fill="none" />
        <text className={look} fontSize={size} stroke="#18171b" strokeWidth="2" paintOrder="stroke">
          <textPath href={`#${id}`}>{text}</textPath>
        </text>
      </g>
    );
  }
  const len = Math.hypot(x2 - x1, y2 - y1);
  const angle = (Math.atan2(y2 - y1, x2 - x1) * 180) / Math.PI;
  return (
    <text
      className={look}
      fontSize={size}
      textLength={len}
      lengthAdjust={kind === 2 ? "spacing" : "spacingAndGlyphs"}
      transform={`translate(${x1} ${y1}) rotate(${angle})`}
      stroke="#18171b"
      strokeWidth="2"
      paintOrder="stroke"
    >
      {text}
    </text>
  );
}

function CityMap() {
  return (
    <svg className="col-start-1 row-start-1 h-[1080px] w-[1920px] font-['Roboto',sans-serif]" viewBox="0 0 1920 1080" aria-hidden="true">
      <defs>
        <radialGradient id="vignette" gradientUnits="userSpaceOnUse" cx="960" cy="540" r="1060">
          <stop offset="0.35" stopColor="#121018" stopOpacity="0" />
          <stop offset="0.65" stopColor="#121018" stopOpacity="0.22" />
          <stop offset="1" stopColor="#121018" stopOpacity="0.66" />
        </radialGradient>
      </defs>
      <rect width="1920" height="1080" fill="#1d1c20" />
      {["water", "land", "wide", "mid", "thin"].map((layer) =>
        SHEETS.map((s, i) => (
          <g key={layer + i} transform={`translate(${s.x} ${s.y}) scale(${s.s} ${SY})`} strokeLinejoin="round">
            {(s[layer] || []).map((d, j) => {
              if (layer === "water") return <path key={j} d={d} fill="#161519" />;
              if (layer === "land") return <path key={j} d={d} fill="#1a191c" />;
              const w = layer === "wide" ? 9 : layer === "mid" ? 5 : 1.2;
              return <path key={j} d={d} fill="none" stroke={layer === "thin" ? "#151418" : "#19181b"} strokeWidth={w} vectorEffect="non-scaling-stroke" />;
            })}
          </g>
        ))
      )}
      {SHEETS.map((s, i) => (
        <g key={"l" + i}>
          {s.labels.map((l, j) => (
            <Label key={j} id={`road-${i}-${j}`} sheet={s} data={l} />
          ))}
        </g>
      ))}
      <rect width="1920" height="1080" fill="url(#vignette)" />
    </svg>
  );
}

function Check() {
  return (
    <svg className="mr-[17px] h-6 w-6 drop-shadow-[0_2px_3px_rgba(62,200,10,0.35)]" viewBox="0 0 24 24" fill="none" stroke="#42c80c" strokeWidth="3.6">
      <path d="M2.4 11.2L9 17.3L22 5.2" />
    </svg>
  );
}

function Field({ label, value, valueClass, error, valid }) {
  return (
    <div className={"flex h-[98px] flex-col border-b " + (error ? "border-[#e6003f]" : "border-[#d8d8d8]")}>
      <label className="mt-5 h-5 text-[16px] leading-5 tracking-[0.3px] text-[#b4b4b4]">{label}</label>
      <div className="mt-[19px] flex h-6 items-center justify-between">
        <span className={"text-[22px] leading-6 whitespace-nowrap " + valueClass + (error ? " text-[#e6003f]" : " text-[#1c1c1c]")}>{value}</span>
        {valid && <Check />}
      </div>
    </div>
  );
}

export default function App() {
  return (
    <div className="grid h-[1080px] w-[1920px] overflow-hidden bg-[#1d1c20] font-['Lato',sans-serif]">
      <CityMap />
      <main className="z-10 col-start-1 row-start-1 flex pt-[158px] pl-[686px]">
        <div className="grid h-[764px] w-[570px]">
          <div className="col-start-1 row-start-1 h-[764px] w-[500px] justify-self-end bg-[#5f00e7] shadow-[0_0_80px_rgba(25,2,52,0.85)]" />
          <section className="col-start-1 row-start-1 flex h-[624px] w-[500px] flex-col self-center bg-white px-[45px] shadow-[0_0_100px_rgba(12,10,8,0.54)]">
            <h1 className="mt-[55px] h-12 text-[38px] leading-[48px] font-extrabold tracking-[0.8px] whitespace-nowrap text-[#1c1c1c]">CONTACT US</h1>
            <form className="mt-[34px] flex flex-col">
              <Field label="Name" value="Michał Michalski" valueClass="tracking-[0.08px]" valid />
              <Field label="Email" value="michal.michalski@gmail.com" valueClass="tracking-[0.34px]" valid />
              <Field label="Name" value="Please type your message..." valueClass="tracking-[0.54px]" error />
              <button type="button" className="mt-[55px] h-[78px] bg-[#5f00e7] pb-[2px] text-[22px] font-semibold tracking-[0.6px] text-white shadow-[0_18px_60px_rgba(75,0,165,0.5)]">
                SEND MESSAGE
              </button>
            </form>
          </section>
        </div>
      </main>
    </div>
  );
}
